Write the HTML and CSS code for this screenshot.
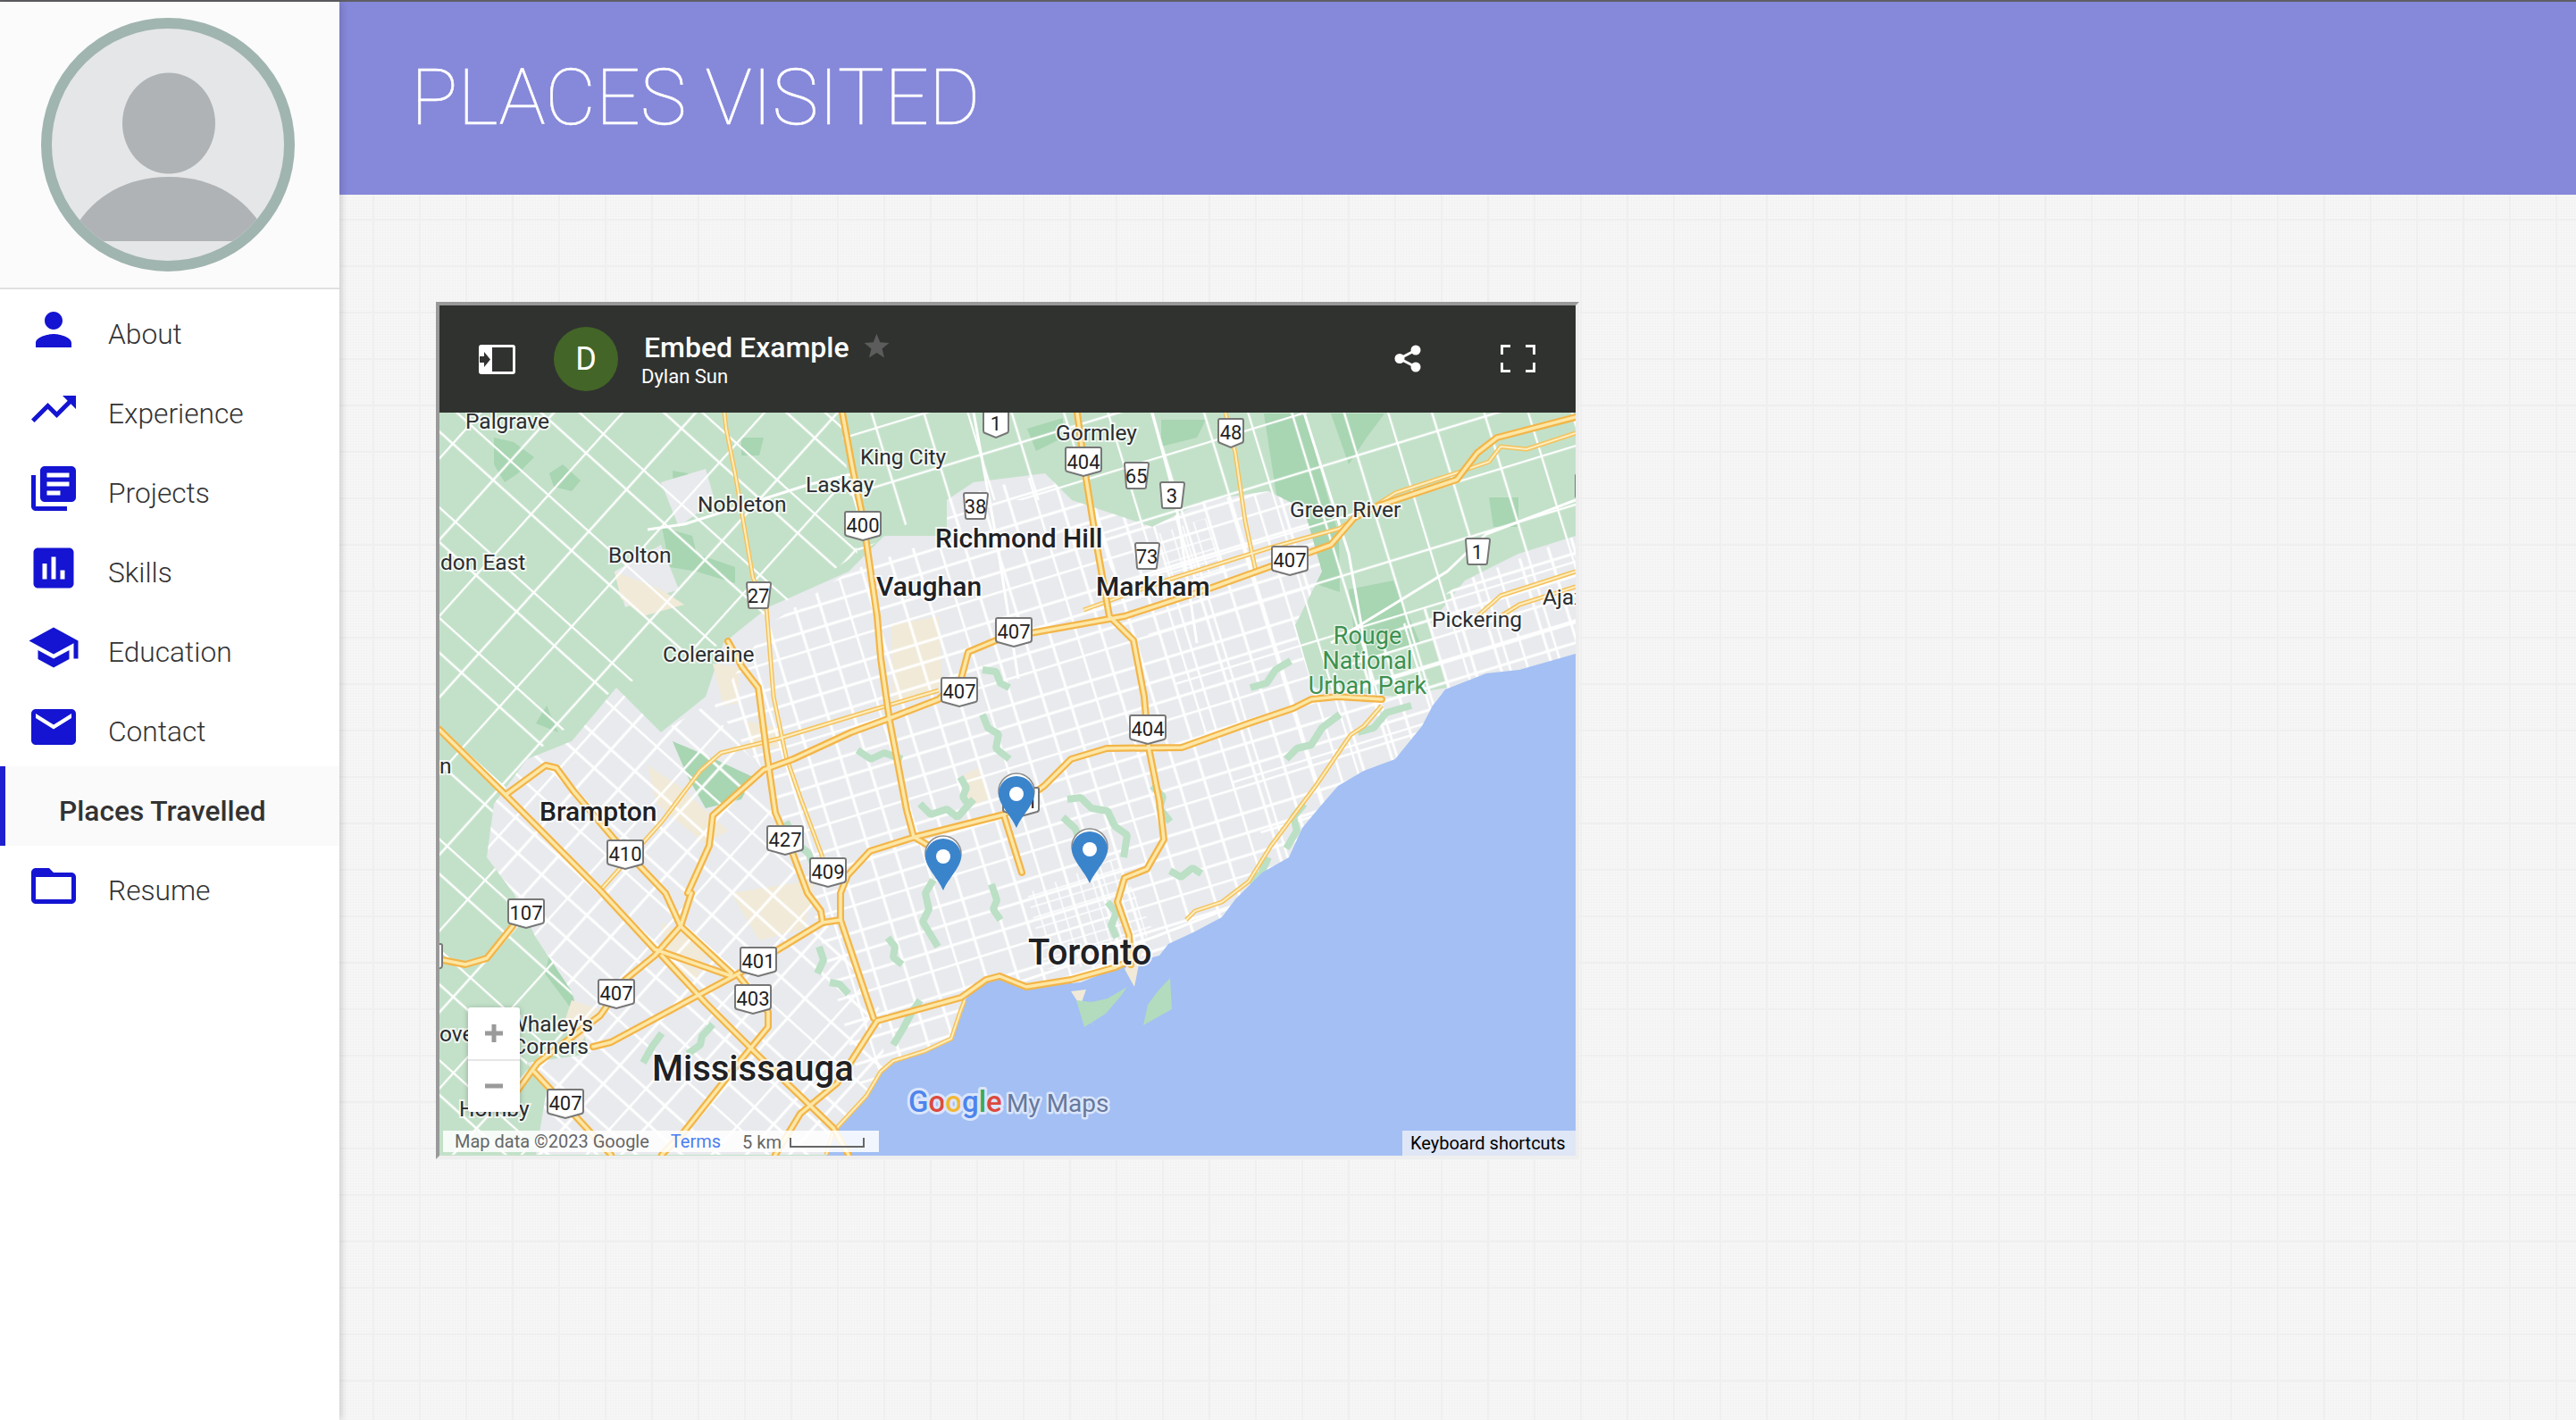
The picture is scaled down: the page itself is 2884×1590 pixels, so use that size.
FILE: index.html
```html
<!DOCTYPE html>
<html lang="en">
<head>
<meta charset="utf-8">
<title>Places Visited</title>
<link rel="stylesheet" href="styles.css">
</head>
<body>
<div class="topline"></div>
<div class="app">
  <aside class="sidebar">
    <div class="profile">
      <svg class="avatar" viewBox="0 0 284 284">
        <defs><clipPath id="avclip"><circle cx="142" cy="142" r="130"/></clipPath></defs>
        <circle class="av-bg" cx="142" cy="142" r="136"/>
        <ellipse class="av-fg" cx="143" cy="118" rx="52" ry="56.5"/>
        <path class="av-fg" clip-path="url(#avclip)" d="M30 250C50 205 90 178 143 178C196 178 236 205 256 250L256 250L256 250H30Z"/>
      </svg>
    </div>
    <nav class="nav">
      <a class="nav-item"><svg class="ico" viewBox="0 0 24 24"><path d="M12 12c2.21 0 4-1.79 4-4s-1.79-4-4-4-4 1.79-4 4 1.79 4 4 4zm0 2c-2.67 0-8 1.34-8 4v2h16v-2c0-2.66-5.33-4-8-4z"/></svg><span>About</span></a>
      <a class="nav-item"><svg class="ico" viewBox="0 0 24 24"><path d="M16 6l2.29 2.29-4.88 4.88-4-4L2 16.59 3.41 18l6-6 4 4 6.3-6.29L22 12V6z"/></svg><span>Experience</span></a>
      <a class="nav-item"><svg class="ico" viewBox="0 0 24 24"><path d="M4 6H2v14c0 1.1.9 2 2 2h14v-2H4V6zm16-4H8c-1.1 0-2 .9-2 2v12c0 1.1.9 2 2 2h12c1.1 0 2-.9 2-2V4c0-1.1-.9-2-2-2zm-1 9H9V9h10v2zm-4 4H9v-2h6v2zm4-8H9V5h10v2z"/></svg><span>Projects</span></a>
      <a class="nav-item"><svg class="ico" viewBox="0 0 24 24"><path d="M19 3H5c-1.1 0-2 .9-2 2v14c0 1.1.9 2 2 2h14c1.1 0 2-.9 2-2V5c0-1.1-.9-2-2-2zM9 17H7v-7h2v7zm4 0h-2V7h2v10zm4 0h-2v-4h2v4z"/></svg><span>Skills</span></a>
      <a class="nav-item"><svg class="ico" viewBox="0 0 24 24"><path d="M5 13.18v4L12 21l7-3.82v-4L12 17l-7-3.82zM12 3L1 9l11 6 9-4.91V17h2V9L12 3z"/></svg><span>Education</span></a>
      <a class="nav-item"><svg class="ico" viewBox="0 0 24 24"><path d="M20 4H4c-1.1 0-1.99.9-1.99 2L2 18c0 1.1.9 2 2 2h16c1.1 0 2-.9 2-2V6c0-1.1-.9-2-2-2zm0 4l-8 5-8-5V6l8 5 8-5v2z"/></svg><span>Contact</span></a>
      <a class="nav-item active"><span>Places Travelled</span></a>
      <a class="nav-item"><svg class="ico" viewBox="0 0 24 24"><path d="M20 6h-8l-2-2H4c-1.1 0-1.99.9-1.99 2L2 18c0 1.1.9 2 2 2h16c1.1 0 2-.9 2-2V8c0-1.1-.9-2-2-2zm0 12H4V8h16v10z"/></svg><span>Resume</span></a>
    </nav>
  </aside>
  <main class="main">
    <header class="banner"><h1>PLACES VISITED</h1></header>
    <section class="content">
      <div class="embed">
        <div class="embed-bar">
          <svg class="bar-collapse" viewBox="0 0 41 33"><path d="M3 0H38a3 3 0 0 1 3 3V30a3 3 0 0 1-3 3H3a3 3 0 0 1-3-3V3a3 3 0 0 1 3-3ZM15 3V30H38V3Z" fill-rule="evenodd"/><path class="bar-arrow" d="M1 13H6V8L13 16.500 6 25V20H1Z"/></svg>
          <div class="bar-avatar">D</div>
          <div class="bar-text">
            <div class="bar-title"><span>Embed Example</span><svg class="bar-star" viewBox="0 0 24 24"><path d="M12 1.500l3.100 7.900 8.400.5-6.500 5.400 2.100 8.200L12 19l-7.100 4.500L7 15.300.5 9.900l8.400-.5z"/></svg></div>
            <div class="bar-sub">Dylan Sun</div>
          </div>
          <svg class="bar-share" viewBox="0 0 30 31"><path class="share-line" d="M24 6L6 15.500L24 25"/><circle cx="24" cy="6" r="5.500"/><circle cx="6" cy="15.500" r="5.500"/><circle cx="24" cy="25" r="5.500"/></svg>
          <svg class="bar-full" viewBox="0 0 39 31"><path d="M1.500 11V1.500H11M28 1.500H37.500V11M37.500 20V29.500H28M11 29.500H1.500V20"/></svg>
        </div>
        <div class="map">
          <svg class="map-svg" viewBox="492 462 1272 832">
            <defs>
              <pattern id="gE" width="118" height="96" patternUnits="userSpaceOnUse" patternTransform="rotate(-17)"><path class="st" d="M0 1H118M0 30H118M0 52H118M0 76H118M1 0V96M28 0V96M62 0V96M90 0V96"/></pattern>
              <pattern id="gC" width="40" height="24" patternUnits="userSpaceOnUse" patternTransform="rotate(-17)"><path class="st-f" d="M0 1H40M0 13H40M1 0V24M14 0V24M27 0V24"/></pattern>
              <pattern id="gW" width="104" height="128" patternUnits="userSpaceOnUse" patternTransform="rotate(42)"><path class="st" d="M0 1H104M0 38H104M0 66H104M0 100H104M1 0V128M30 0V128M66 0V128"/></pattern>
              <pattern id="gN" width="150" height="124" patternUnits="userSpaceOnUse" patternTransform="rotate(-17)"><path class="st-r" d="M0 1H150M0 64H150M1 0V124M48 0V124M104 0V124"/></pattern>
              <pattern id="gNW" width="118" height="92" patternUnits="userSpaceOnUse" patternTransform="rotate(42)"><path class="st-r" d="M0 1H118M0 30H118M1 0V92M62 0V92"/></pattern>
              <g id="hw">
                <path d="M943 462L955 527L966 580L982 690L986 737L996 807L1015 907L1023 937L1045 950"/>
                <path d="M815 718L831 747L849 770L858 840L868 910L888 957L904 1000L919 1020L921 1033"/>
                <path d="M492 817L566 890L672 997L733 1063L819 1093"/>
                <path d="M566 890L611 857L623 860L643 887L688 940L745 1000L762 1037L819 1090"/>
                <path d="M774 1000L762 1037L733 1070L700 1097L672 1137L602 1190L578 1223"/>
                <path d="M598 1200L651 1257L684 1293"/>
                <path d="M664 1172L684 1167L827 1090L888 1053L921 1033L941 1030"/>
                <path d="M941 1030L941 1000L949 980L974 953L1025 937L1124 912L1169 880L1199 850L1239 838L1323 837L1398 810L1448 793L1468 783L1497 780L1547 783"/>
                <path d="M1120 715L1084 730L1076 760L1051 783L994 805L953 820L888 850L855 862L827 887L798 913L794 947L770 1000"/>
                <path d="M1764 467L1676 490L1654 507L1631 537L1541 567L1516 580L1490 610L1415 637L1351 660L1259 690L1120 715"/>
                <path d="M1206 462L1215 530L1229 617L1242 690L1269 717L1281 780L1286 837L1298 897L1303 940L1284 973L1259 983L1251 1010L1264 1047L1266 1080"/>
                <path d="M1124 913L1144 977"/>
                <path d="M574 1037L545 1073L521 1080L496 1075"/>
                <path d="M982 1143L1076 1117L1104 1097L1119 1093L1149 1105L1199 1097L1249 1083L1266 1075"/>
                <path d="M982 1143L937 1213L896 1247L868 1293"/>
                <path d="M941 1030L978 1140"/>
                <path d="M827 1093L860 1133L860 1150L827 1190L766 1267L741 1293"/>
                <path d="M741 1070L790 1123L847 1180L933 1263L950 1293"/>
              </g>
              <g id="hwthin">
                <path d="M811 462L813 480L823 530L843 647L858 680L866 780L880 847L896 893L921 960"/>
                <path d="M784 863L807 843L872 827L970 797L1051 773"/>
                <path d="M784 863L741 920L672 997"/>
                <path d="M1764 485L1709 503L1680 500L1667 517L1629 530L1562 552L1499 592L1423 613L1305 650L1213 683"/>
                <path d="M1372 462L1383 507L1394 583L1406 640"/>
                <path d="M1764 640L1680 667L1654 690"/>
                <path d="M1764 657L1701 677L1680 690"/>
                <path d="M1547 790L1527 813L1512 823L1473 880L1423 947L1398 987L1368 1010L1338 1020L1328 1030"/>
                <path d="M1080 1120L1075 1133L1065 1163L1035 1177L1000 1188L986 1200L970 1227L933 1267L925 1293"/>
              </g>
              <path id="sh3" d="M-20-14a2 2 0 0 1 2-2H18a2 2 0 0 1 2 2V8a3 3 0 0 1-2 3L0 16L-18 11a3 3 0 0 1-2-3Z"/>
              <path id="sh2" d="M-13-13a2 2 0 0 1 2-2H12a2 2 0 0 1 2 2L11 12a2 2 0 0 1-2 2H-9a2 2 0 0 1-2-2Z"/>
              <path id="sh4" d="M-14-14a2 2 0 0 1 2-2H12a2 2 0 0 1 2 2V8a3 3 0 0 1-2 3L0 16L-12 11a3 3 0 0 1-2-3Z"/>
              <g id="pin">
                <path class="pin-halo" d="M0-3C-6-17-20-29-20-41A20 20 0 1 1 20-41C20-29 6-17 0-3Z"/>
                <path class="pin-body" d="M0 0C-6-14-20-26-20-38A20 20 0 1 1 20-38C20-26 6-14 0 0Z"/>
                <ellipse class="pin-dot" cx="0" cy="-38" rx="8" ry="8"/>
              </g>
            </defs>

            <rect class="land" x="492" y="462" width="1272" height="832"/>

            <g class="forest">
              <path d="M553 490L575 495L598 512L580 530L565 540L553 520Z"/>
              <path d="M615 530L630 520L650 538L640 550L620 545Z"/>
              <path d="M753 527L770 530L778 555L755 560Z"/>
              <path d="M741 590L775 600L780 620L823 635L823 653L780 640L750 635Z"/>
              <path d="M830 490L855 490L850 510L830 510Z"/>
              <path d="M1415 463L1460 463L1499 600L1500 663L1462 650L1430 560Z"/>
              <path d="M1490 463L1550 463L1530 490L1510 520Z"/>
              <path d="M1667 557L1700 557L1700 590L1672 590Z"/>
              <path d="M1510 660L1560 650L1590 720L1520 740Z"/>
              <path d="M1300 470L1350 470L1340 490L1300 500Z"/>
              <path d="M1150 480L1190 468L1190 490L1160 505Z"/>
              <path d="M620 1050L660 1100L640 1130L610 1090Z"/>
              <path d="M612 790L625 820L600 810Z"/>
            </g>

            <path class="urban" d="M600 1293L612 1220L590 1190L660 1180L640 1110L600 1050L575 1000L545 960L553 900L590 850L640 830L690 770L740 820L790 780L810 720L860 680L950 640L990 600L1060 600L1060 560L1090 540L1170 530L1200 560L1290 590L1350 560L1420 550L1460 570L1480 640L1450 700L1470 770L1560 780L1620 770L1600 700L1640 650L1700 620L1764 600V1293Z"/>
            <path class="urban" d="M688 640L740 610L760 660L700 680Z"/>
            <path class="urban" d="M740 540L790 525L800 560L760 590Z"/>

            <g class="tan">
              <path d="M798 743L827 747L827 787L810 790Z"/>
              <path d="M725 857L760 880L815 930L790 945L735 900Z"/>
              <path d="M998 700L1051 690L1055 767L1000 790Z"/>
              <path d="M835 807L872 815L872 837L840 840Z"/>
              <path d="M819 1000L913 985L900 1040L850 1053Z"/>
              <path d="M741 1033L794 1060L780 1097L745 1080Z"/>
              <path d="M688 640L740 660L766 677L720 690L695 670Z"/>
              <path d="M1080 867L1095 860L1109 893L1085 905Z"/>
              <path d="M640 1120L670 1130L650 1170L630 1150Z"/>
            </g>
            <path class="forest-f" d="M753 830L800 850L843 870L830 895L790 905L770 870Z"/>

            <path fill="url(#gNW)" d="M492 462H940L960 620L810 720L690 770L590 850L553 900L545 960L575 1000L640 1110L660 1180L590 1190L600 1293H492Z"/>
            <path fill="url(#gN)" d="M940 462H1764V1000H1450L1200 560L1060 560L960 620Z"/>
            <path fill="url(#gW)" d="M600 1293L612 1220L590 1190L660 1180L640 1110L600 1050L575 1000L545 960L553 900L590 850L640 830L690 770L740 820L790 790L860 870L905 1000L985 1130L1000 1293Z"/>
            <path fill="url(#gE)" d="M860 700L950 640L1060 600L1060 560L1170 530L1200 560L1290 590L1350 560L1420 550L1460 570L1480 640L1450 700L1470 770L1640 650L1764 600V1293H985L905 1000L860 870L800 790Z"/>
            <path fill="url(#gC)" d="M1150 1000L1250 960L1290 1040L1260 1080L1170 1085Z"/>
            <path fill="url(#gC)" d="M1290 600L1350 580L1370 640L1310 650Z"/>

            <g class="ravine">
              <path d="M1195 895L1210 893L1222 905L1240 908L1248 925L1262 935L1258 960"/>
              <path d="M1100 800L1106 815L1118 822L1115 838L1130 850"/>
              <path d="M1075 870L1082 882L1078 892L1085 903"/>
              <path d="M1030 900L1042 912L1060 906L1072 915L1090 895"/>
              <path d="M1045 985L1036 1000L1040 1018L1033 1032L1050 1060"/>
              <path d="M1110 990L1116 1008L1112 1018L1120 1030"/>
              <path d="M1240 1010L1250 1022L1244 1036L1250 1050"/>
              <path d="M1190 915L1204 928L1212 950L1224 962"/>
              <path d="M1290 880L1302 892L1298 905L1310 920"/>
              <path d="M1310 975L1322 982L1335 972L1345 978"/>
              <path d="M1440 850L1452 838L1468 834L1480 815L1500 800"/>
              <path d="M1520 820L1538 815L1552 798L1580 790"/>
              <path d="M1460 900L1448 915L1452 930L1440 950"/>
              <path d="M1100 750L1115 752L1120 765L1130 770"/>
              <path d="M960 840L975 850L990 843L1010 850"/>
              <path d="M880 920L892 945L905 955L920 990"/>
              <path d="M917 1060L922 1075L915 1090"/>
              <path d="M994 1050L1002 1060L1000 1072L1010 1080"/>
              <path d="M929 1100L940 1102L950 1113"/>
              <path d="M798 1147L786 1160L784 1170L770 1180"/>
              <path d="M741 1157L730 1172L720 1190"/>
              <path d="M1400 770L1418 765L1428 750L1445 740"/>
              <path d="M1030 1120L1020 1135L1012 1150L1000 1170"/>
              <path d="M1400 990L1412 978L1420 960"/>
            </g>

            <g class="street">
              <path d="M725 593L766 587L904 543L957 530"/>
              <path d="M1290 462L1316 560L1340 720M1090 462L1115 600L1140 760"/>
              <path d="M1460 462L1510 620L1540 790"/>
              <path d="M1530 1000L1640 780"/>
              <path d="M1080 1120L1290 1050L1420 1000"/>
              <path d="M1490 720L1620 640L1664 598L1764 560"/>
            </g>

            <path class="water" d="M1764 732L1701 750L1664 754L1618 772L1612 780L1604 790L1592 813L1562 850L1527 863L1498 880L1478 903L1458 927L1443 960L1413 977L1383 1007L1368 1027L1338 1043L1308 1057L1298 1070L1259 1080L1210 1100L1149 1105L1119 1095L1095 1103L1080 1120L1075 1133L1065 1163L1035 1177L1000 1188L986 1200L970 1227L933 1267L925 1294H1764Z"/>
            <path class="tan" d="M1199 1110L1216 1108L1210 1125L1225 1150Z"/>
            <path class="park" d="M1205 1120L1222 1122L1240 1118L1262 1105L1255 1115L1238 1135L1214 1150Z"/>
            <path class="park" d="M1280 1148L1285 1125L1296 1110L1310 1095L1312 1130Z"/>
            <path class="tan" d="M1259 1085L1280 1060L1275 1080L1270 1105Z"/>

            <use href="#hwthin" class="thin-o"/>
            <use href="#hwthin" class="thin-i"/>
            <use href="#hw" class="hw-o"/>
            <use href="#hw" class="hw-i"/>

            <g class="shield">
              <g transform="translate(1115 474)"><use href="#sh4"/><text class="sh-t" y="8">1</text></g>
              <g transform="translate(1378 485)"><use href="#sh4"/><text class="sh-t" y="7">48</text></g>
              <g transform="translate(1213 517)"><use href="#sh3"/><text class="sh-t" y="8">404</text></g>
              <g transform="translate(1272 533)"><use href="#sh2"/><text class="sh-t" y="8">65</text></g>
              <g transform="translate(1312 555)"><use href="#sh2"/><text class="sh-t" y="8">3</text></g>
              <g transform="translate(1092 567)"><use href="#sh2"/><text class="sh-t" y="8">38</text></g>
              <g transform="translate(966 589)"><use href="#sh3"/><text class="sh-t" y="7">400</text></g>
              <g transform="translate(1284 623)"><use href="#sh2"/><text class="sh-t" y="8">73</text></g>
              <g transform="translate(1444 628)"><use href="#sh3"/><text class="sh-t" y="7">407</text></g>
              <g transform="translate(1654 618)"><use href="#sh2"/><text class="sh-t" y="8">1</text></g>
              <g transform="translate(849 667)"><use href="#sh2"/><text class="sh-t" y="8">27</text></g>
              <g transform="translate(1135 708)"><use href="#sh3"/><text class="sh-t" y="7">407</text></g>
              <g transform="translate(1074 775)"><use href="#sh3"/><text class="sh-t" y="7">407</text></g>
              <g transform="translate(1285 817)"><use href="#sh3"/><text class="sh-t" y="7">404</text></g>
              <g transform="translate(879 941)"><use href="#sh3"/><text class="sh-t" y="7">427</text></g>
              <g transform="translate(927 977)"><use href="#sh3"/><text class="sh-t" y="7">409</text></g>
              <g transform="translate(700 957)"><use href="#sh3"/><text class="sh-t" y="7">410</text></g>
              <g transform="translate(589 1023)"><use href="#sh3"/><text class="sh-t" y="7">107</text></g>
              <g transform="translate(849 1077)"><use href="#sh3"/><text class="sh-t" y="7">401</text></g>
              <g transform="translate(843 1119)"><use href="#sh3"/><text class="sh-t" y="7">403</text></g>
              <g transform="translate(690 1113)"><use href="#sh3"/><text class="sh-t" y="7">407</text></g>
              <g transform="translate(633 1236)"><use href="#sh3"/><text class="sh-t" y="7">407</text></g>
              <g transform="translate(1143 898)"><use href="#sh3"/><text class="sh-t" y="7">401</text></g>
              <g transform="translate(475 1073)"><use href="#sh3"/></g>
              <g transform="translate(1784 547)"><use href="#sh3"/></g>
            </g>

            <g class="lb">
              <text x="521" y="480">Palgrave</text>
              <text x="963" y="520">King City</text>
              <text x="902" y="551">Laskay</text>
              <text x="781" y="573">Nobleton</text>
              <text x="681" y="630">Bolton</text>
              <text x="493" y="638">don East</text>
              <text x="1182" y="493">Gormley</text>
              <text x="1444" y="579">Green River</text>
              <text x="1727" y="677">Ajax</text>
              <text x="1603" y="702">Pickering</text>
              <text x="742" y="741">Coleraine</text>
              <text x="492" y="866">n</text>
              <text x="664" y="1155" class="end">Whaley's</text>
              <text x="659" y="1180" class="end">Corners</text>
              <text x="492" y="1166">ove</text>
              <text x="514" y="1250">Hornby</text>
            </g>
            <g class="lb-park">
              <text x="1531" y="721">Rouge</text>
              <text x="1531" y="749">National</text>
              <text x="1531" y="777">Urban Park</text>
            </g>
            <g class="lb-m">
              <text x="1047" y="613">Richmond Hill</text>
              <text x="981" y="667">Vaughan</text>
              <text x="1227" y="667">Markham</text>
              <text x="604" y="919">Brampton</text>
            </g>
            <g class="lb-l">
              <text x="1151" y="1080">Toronto</text>
              <text x="730" y="1210">Mississauga</text>
            </g>

            <use href="#pin" x="1138" y="927"/>
            <use href="#pin" x="1056" y="997"/>
            <use href="#pin" x="1220" y="989"/>

            <text class="gm" x="1017" y="1245"><tspan class="g-b">G</tspan><tspan class="g-r">o</tspan><tspan class="g-y">o</tspan><tspan class="g-b">g</tspan><tspan class="g-g">l</tspan><tspan class="g-r">e</tspan></text>
            <text class="gm-sub" x="1127" y="1245">My Maps</text>
          </svg>
          <div class="zoom-ctl">
            <div class="zoom-btn"><svg viewBox="0 0 24 24"><path d="M12 2V22M2 12H22"/></svg></div>
            <div class="zoom-btn"><svg viewBox="0 0 24 24"><path d="M2 12H22"/></svg></div>
          </div>
          <div class="attrib">
            <span class="attrib-data">Map data ©2023 Google</span>
            <span class="attrib-terms">Terms</span>
            <span class="attrib-scale">5 km</span>
            <svg class="scale-bar" viewBox="0 0 84 11"><path d="M1 0V10H83V0"/></svg>
          </div>
          <div class="kbd">Keyboard shortcuts</div>
        </div>
      </div>
    </section>
  </main>
</div>
</body>
</html>
```
FILE: styles.css
```css
* { box-sizing: border-box; }
html, body { margin: 0; height: 100%; }
body {
  font-family: Roboto, "Liberation Sans", sans-serif;
  color: #333;
  background: #fff;
  overflow: hidden;
}
.topline { height: 2px; background: #5f5f65; }
.app { display: flex; height: 1588px; }

/* sidebar */
.sidebar {
  width: 380px;
  flex: none;
  background: #fff;
  box-shadow: 2px 0 8px rgba(0, 0, 0, .18);
  position: relative;
  z-index: 2;
}
.profile {
  height: 322px;
  background: #fbfbfb;
  border-bottom: 2px solid #e0e0e0;
  padding-left: 46px;
  padding-top: 18px;
}
.avatar { display: block; width: 284px; height: 284px; }
.av-bg { fill: #e5e6e8; stroke: #a1b5b0; stroke-width: 12; }
.av-fg { fill: #afb3b5; }
.nav { display: flex; flex-direction: column; }
.nav-item {
  height: 89px;
  display: flex;
  align-items: center;
  padding-left: 30px;
  font-size: 31.700px;
  font-weight: 300;
  color: #333;
}
.nav-item span { margin-left: 31px; padding-top: 11px; }
.ico { width: 60px; height: 60px; fill: #1414d2; flex: none; }
.nav-item.active {
  background: #fafafa;
  border-left: 6px solid #1f1fd0;
  padding-left: 60px;
  font-weight: 500;
}
.nav-item.active span { margin-left: 0; }

/* main */
.main {
  flex: 1;
  background-color: #f7f7f7;
  background-image:
    linear-gradient(#efefef 2px, transparent 2px),
    linear-gradient(90deg, #efefef 2px, transparent 2px),
    linear-gradient(#f3f3f3 1px, transparent 1px),
    linear-gradient(90deg, #f3f3f3 1px, transparent 1px);
  background-size: 52px 52px, 52px 52px, 3px 3px, 3px 3px;
  background-position: 37px 35px, 37px 35px, 0 0, 0 0;
}
.banner {
  height: 216px;
  background: #8688da;
  padding-left: 80px;
  display: flex;
  align-items: center;
}
.banner h1 {
  margin: 0;
  font-size: 87.500px;
  font-weight: 100;
  color: #fff;
  line-height: 1;
  -webkit-text-stroke: .6px #fff;
}
.content { padding: 120px 0 0 108px; }

/* embed */
.embed {
  width: 1280px;
  height: 960px;
  border: 4px solid;
  border-color: #999 #eee #eee #999;
  display: flex;
  flex-direction: column;
}
.embed-bar {
  height: 120px;
  background: #30322f;
  color: #fff;
  display: flex;
  align-items: center;
  padding-left: 44px;
  flex: none;
}
.bar-collapse { width: 41px; height: 33px; fill: #fff; flex: none; }
.bar-arrow { fill: #30322f; }
.bar-avatar {
  width: 72px;
  height: 72px;
  border-radius: 50%;
  background: #436527;
  margin-left: 43px;
  display: flex;
  align-items: center;
  justify-content: center;
  font-size: 36px;
  flex: none;
}
.bar-text { margin-left: 26px; flex: none; width: 331px; }
.bar-title { display: flex; align-items: center; font-size: 32px; font-weight: 500; line-height: 38px; padding-left: 3px; }
.bar-star { width: 29px; height: 29px; fill: #5c5c5c; margin-left: 16px; margin-top: -5px; }
.bar-sub { font-size: 22px; line-height: 26px; margin-top: 1px; }
.bar-share { width: 30px; height: 31px; fill: #fff; margin-left: 512px; margin-top: -2px; flex: none; }
.share-line { fill: none; stroke: #fff; stroke-width: 3; }
.bar-full { width: 39px; height: 31px; fill: none; stroke: #fff; stroke-width: 3; margin-left: 89px; margin-top: -2px; flex: none; }

.map { position: relative; flex: 1; overflow: hidden; }
.map-svg { display: block; width: 1272px; height: 832px; font-family: Roboto, "Liberation Sans", sans-serif; }
.land { fill: #c3e1c9; }
.forest path, .forest-f { fill: #a8d5b2; }
.urban { fill: #e8eaed; }
.tan, .tan path { fill: #f1ead8; }
.park { fill: #b2dcbd; }
.ravine path { fill: none; stroke: #bbe0c5; stroke-width: 8; stroke-linejoin: bevel; }
.water { fill: #a3bff4; }
.st { fill: none; stroke: #fff; stroke-width: 3; }
.st-f { fill: none; stroke: #fff; stroke-width: 1.500; }
.st-r { fill: none; stroke: #fff; stroke-width: 2.500; }
.street path { fill: none; stroke: #fff; stroke-width: 3; }
.hw-o { fill: none; stroke: #f3b548; stroke-width: 8; stroke-linejoin: round; stroke-linecap: round; }
.hw-i { fill: none; stroke: #fde7a6; stroke-width: 3.500; stroke-linejoin: round; stroke-linecap: round; }
.thin-o { fill: none; stroke: #f5c25c; stroke-width: 5; stroke-linejoin: round; }
.thin-i { fill: none; stroke: #fdeec0; stroke-width: 2; stroke-linejoin: round; }
.shield use { fill: #fff; stroke: #777; stroke-width: 2; }
.sh-t { font-size: 22px; fill: #222; text-anchor: middle; }
.lb text { font-size: 24.500px; fill: #2a2d30; stroke: #fff; stroke-width: 4; stroke-opacity: .75; paint-order: stroke; }
.lb .end { text-anchor: end; }
.lb-park text { font-size: 27px; fill: #3c9150; text-anchor: middle; stroke: #fff; stroke-opacity: .6; stroke-width: 3; paint-order: stroke; }
.lb-m text { font-size: 30px; font-weight: 500; fill: #202124; stroke: #fff; stroke-width: 4; stroke-opacity: .8; paint-order: stroke; }
.lb-l text { font-size: 40px; font-weight: 500; fill: #202124; stroke: #fff; stroke-width: 4; stroke-opacity: .8; paint-order: stroke; }
.pin-halo { fill: #fff; stroke: #8a8a8a; stroke-width: 1.500; }
.pin-body { fill: #3a84cc; }
.pin-dot { fill: #fff; }
.gm { font-size: 33px; font-weight: 500; stroke: #dbe6fb; stroke-width: 6; paint-order: stroke; stroke-linejoin: round; }
.g-b { fill: #4f84ec; }
.g-r { fill: #dc4a3d; }
.g-y { fill: #f2b733; }
.g-g { fill: #3ea85a; }
.gm-sub { font-size: 28px; fill: #67789c; stroke: #dbe6fb; stroke-width: 5; paint-order: stroke; stroke-linejoin: round; }

.zoom-ctl {
  position: absolute;
  left: 32px;
  top: 666px;
  width: 58px;
  height: 117px;
  background: #fff;
  border-radius: 3px;
  box-shadow: 0 1px 6px rgba(0, 0, 0, .25);
  display: flex;
  flex-direction: column;
}
.zoom-btn { flex: 1; display: flex; align-items: center; justify-content: center; }
.zoom-btn + .zoom-btn { border-top: 2px solid #e6e6e6; }
.zoom-btn svg { width: 24px; height: 24px; fill: none; stroke: #9a9a9a; stroke-width: 5; }
.attrib {
  position: absolute;
  left: 4px;
  bottom: 4px;
  width: 488px;
  height: 24px;
  background: rgba(255, 255, 255, .85);
  display: flex;
  align-items: center;
  padding-left: 13px;
  font-size: 20px;
  color: #666;
  white-space: nowrap;
}
.attrib-terms { color: #4d7df0; margin-left: 24px; }
.attrib-scale { margin-left: 24px; margin-top: 2px; }
.scale-bar { width: 84px; height: 11px; fill: none; stroke: #666; stroke-width: 2; margin-left: 9px; margin-top: 3px; }
.kbd {
  position: absolute;
  right: 0;
  bottom: 0;
  width: 194px;
  height: 28px;
  background: #dfe6f6;
  color: #000;
  font-size: 20px;
  display: flex;
  align-items: center;
  padding-left: 9px;
  white-space: nowrap;
}
```
